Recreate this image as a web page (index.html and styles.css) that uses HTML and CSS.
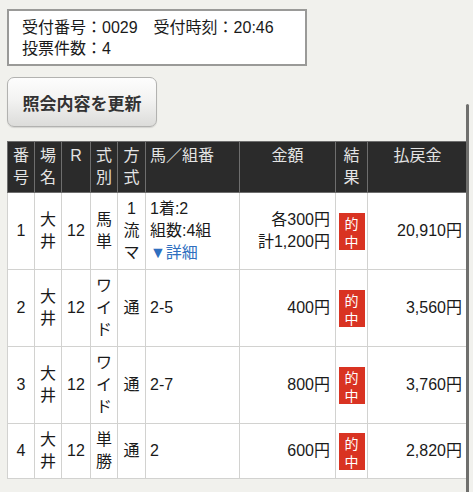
FILE: index.html
```html
<!DOCTYPE html>
<html lang="ja">
<head>
<meta charset="utf-8">
<link rel="stylesheet" href="styles.css">
</head>
<body>
<div class="page">
  <div class="info">
    <div>受付番号：0029　受付時刻：20:46</div>
    <div>投票件数：4</div>
  </div>
  <button class="refresh">照会内容を更新</button>
  <table class="bets">
    <colgroup>
      <col class="c-no"><col class="c-place"><col class="c-r"><col class="c-type"><col class="c-method"><col class="c-horse"><col class="c-amount"><col class="c-result"><col class="c-pay">
    </colgroup>
    <thead>
      <tr>
        <th>番<br>号</th><th>場<br>名</th><th>R</th><th>式<br>別</th><th>方<br>式</th><th class="left">馬／組番</th><th>金額</th><th>結<br>果</th><th>払戻金</th>
      </tr>
    </thead>
    <tbody>
      <tr>
        <td class="center">1</td><td class="center">大<br>井</td><td class="center">12</td><td class="center">馬<br>単</td><td class="center">1<br>流<br>マ</td>
        <td>1着:2<br>組数:4組<br><span class="detail">▼詳細</span></td>
        <td class="right">各300円<br>計1,200円</td><td class="center"><span class="hit">的<br>中</span></td><td class="right">20,910円</td>
      </tr>
      <tr>
        <td class="center">2</td><td class="center">大<br>井</td><td class="center">12</td><td class="center">ワ<br>イ<br>ド</td><td class="center">通</td>
        <td>2-5</td>
        <td class="right">400円</td><td class="center"><span class="hit">的<br>中</span></td><td class="right">3,560円</td>
      </tr>
      <tr>
        <td class="center">3</td><td class="center">大<br>井</td><td class="center">12</td><td class="center">ワ<br>イ<br>ド</td><td class="center">通</td>
        <td>2-7</td>
        <td class="right">800円</td><td class="center"><span class="hit">的<br>中</span></td><td class="right">3,760円</td>
      </tr>
      <tr>
        <td class="center">4</td><td class="center">大<br>井</td><td class="center">12</td><td class="center">単<br>勝</td><td class="center">通</td>
        <td>2</td>
        <td class="right">600円</td><td class="center"><span class="hit">的<br>中</span></td><td class="right">2,820円</td>
      </tr>
    </tbody>
  </table>
</div>
<div class="scrollbar"></div>
</body>
</html>
```
FILE: styles.css
```css
html, body {
  margin: 0;
  padding: 0;
  background: #f1f1ed;
}
body {
  font-family: "Liberation Sans", "Noto Sans CJK JP", sans-serif;
  font-size: 16px;
  color: #1a1a1a;
  width: 473px;
  height: 492px;
  overflow: hidden;
  position: relative;
}
.page {
  padding: 9px 6px 0 7px;
  display: flex;
  flex-direction: column;
  align-items: flex-start;
}
.info {
  box-sizing: border-box;
  width: 300px;
  height: 57px;
  background: #fff;
  border: 2px solid #9a9a98;
  padding: 6px 13px;
  line-height: 21px;
}
.refresh {
  margin-top: 11px;
  box-sizing: border-box;
  width: 150px;
  height: 50px;
  border: 1px solid #b2b2b0;
  border-radius: 7px;
  background: linear-gradient(#fdfdfd 0%, #f3f3f2 45%, #dcdcda 100%);
  box-shadow: 0 1px 1px rgba(0,0,0,0.12);
  font-family: "Noto Sans CJK JP", sans-serif;
  font-weight: bold;
  font-size: 17px;
  color: #333;
  padding: 0;
}
.bets {
  margin-top: 14px;
  width: 460px;
  table-layout: fixed;
  border-collapse: collapse;
  background: #fff;
  border: 1px solid #cfcfcd;
}
.c-no { width: 27px; }
.c-place { width: 27px; }
.c-r { width: 29px; }
.c-type { width: 27px; }
.c-method { width: 28px; }
.c-horse { width: 94px; }
.c-amount { width: 96px; }
.c-result { width: 32px; }
.c-pay { width: 100px; }
.bets th {
  background: #2b2b2b;
  color: #e4e4e4;
  font-weight: normal;
  vertical-align: top;
  text-align: center;
  line-height: 22px;
  padding: 3px 0 3px;
  border: 1px solid #6e6e6e;
}
.bets th.left {
  text-align: left;
  padding-left: 4px;
}
.bets td {
  border: 1px solid #d2d2d0;
  line-height: 22px;
  padding: 5px 4px 5px;
  vertical-align: middle;
  text-align: left;
}
.bets td.center {
  text-align: center;
  padding-left: 0;
  padding-right: 0;
}
.bets td.right {
  text-align: right;
  padding-right: 5px;
}
.detail {
  color: #2f6fbf;
}
.hit {
  display: inline-block;
  width: 26px;
  padding: 1px 0 0;
  background: #d93322;
  color: #fff;
  font-family: "Noto Sans CJK JP", sans-serif;
  font-size: 14px;
  line-height: 18px;
  text-align: center;
  vertical-align: middle;
}
.scrollbar {
  position: absolute;
  left: 466px;
  top: 104px;
  width: 3px;
  height: 392px;
  border-radius: 2px;
  background: #6f6f6d;
}
```
